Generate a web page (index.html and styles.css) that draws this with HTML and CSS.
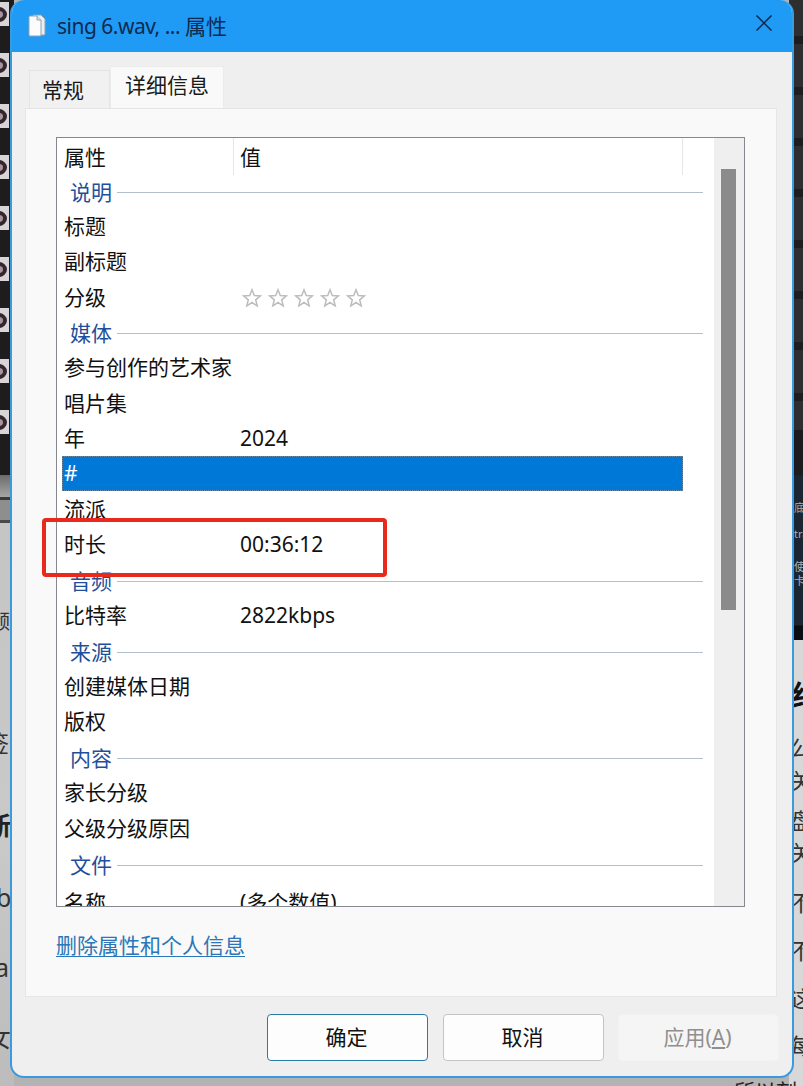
FILE: index.html
```html
<!DOCTYPE html>
<html lang="zh-CN">
<head>
<meta charset="utf-8">
<title>sing 6.wav 属性</title>
<link rel="stylesheet" href="styles.css">
</head>
<body>
<div class="desktop">
  <div class="left-icons">
    <div class="thumb"><i></i></div><div class="thumb"><i></i></div><div class="thumb"><i></i></div>
    <div class="thumb"><i></i></div><div class="thumb"><i></i></div><div class="thumb"><i></i></div>
    <div class="thumb"><i></i></div><div class="thumb"><i></i></div><div class="thumb"><i></i></div>
  </div>
  <div class="left-lower">
    <div class="lower-bar"></div>
    <div class="lower-box"></div>
    <div class="frag f1">频</div>
    <div class="frag f2">签</div>
    <div class="frag f3">新</div>
    <div class="frag f4">b</div>
    <div class="frag f5">a</div>
    <div class="frag f6">女</div>
  </div>
  <div class="right-bands"></div>
  <div class="right-navy">
    <div class="nv n1">底</div>
    <div class="nv n2">tra</div>
    <div class="nv n3">使</div>
    <div class="nv n4">卡</div>
  </div>
  <div class="right-lower">
    <div class="rf r0">红</div>
    <div class="rf r1">公</div>
    <div class="rf r2">关</div>
    <div class="rf r3">盘</div>
    <div class="rf r4">关</div>
    <div class="rf r5">不</div>
    <div class="rf r6">不</div>
    <div class="rf r7">这</div>
    <div class="rf r8">每</div>
  </div>
  <div class="bottom-text">所以刻</div>
</div>

<div class="window">
  <div class="titlebar">
    <svg class="file-icon" viewBox="0 0 20 26" width="20" height="26">
      <path d="M6 3h8l4 4v15a1 1 0 0 1-1 1H6z" fill="#e9eef2" stroke="#8fa3b3" stroke-width="1"/>
      <path d="M2 5a1 1 0 0 1 1-1h7l4 4v15a1 1 0 0 1-1 1H3a1 1 0 0 1-1-1z" fill="#fbfcfd" stroke="#8fa3b3" stroke-width="1"/>
      <path d="M10 4v4h4" fill="#dfe6ec" stroke="#8fa3b3" stroke-width="1"/>
    </svg>
    <span class="title-text"><span class="title-latin">sing 6.wav, ... </span>属性</span>
    <svg class="close-icon" viewBox="0 0 16 16" width="16" height="16">
      <path d="M.5.5l15 15M15.500.5l-15 15" stroke="#0b2447" stroke-width="1.500" fill="none"/>
    </svg>
  </div>

  <div class="client">
    <div class="tabs">
      <div class="tab">常规</div>
      <div class="tab tab-active">详细信息</div>
    </div>
    <div class="panel">
      <div class="listbox">
        <div class="list-body">
          <div class="head-row">
            <div class="head-key">属性</div>
            <div class="head-val">值</div>
          </div>
          <div class="group"><span>说明</span><b></b></div>
          <div class="row"><span>标题</span><span></span></div>
          <div class="row"><span>副标题</span><span></span></div>
          <div class="row"><span>分级</span>
            <span class="stars">
              <svg viewBox="0 0 20 20" width="20" height="20"><path d="M10 1.800l2.300 5.700 6.100.4-4.700 3.900 1.500 6-5.200-3.300-5.200 3.300 1.500-6-4.700-3.900 6.100-.4z" fill="#fff" stroke="#bdbdbd" stroke-width="1.500"/></svg>
              <svg viewBox="0 0 20 20" width="20" height="20"><path d="M10 1.800l2.300 5.700 6.100.4-4.700 3.900 1.500 6-5.200-3.300-5.200 3.300 1.500-6-4.700-3.900 6.100-.4z" fill="#fff" stroke="#bdbdbd" stroke-width="1.500"/></svg>
              <svg viewBox="0 0 20 20" width="20" height="20"><path d="M10 1.800l2.300 5.700 6.100.4-4.700 3.900 1.500 6-5.200-3.300-5.200 3.300 1.500-6-4.700-3.900 6.100-.4z" fill="#fff" stroke="#bdbdbd" stroke-width="1.500"/></svg>
              <svg viewBox="0 0 20 20" width="20" height="20"><path d="M10 1.800l2.300 5.700 6.100.4-4.700 3.900 1.500 6-5.200-3.300-5.200 3.300 1.500-6-4.700-3.900 6.100-.4z" fill="#fff" stroke="#bdbdbd" stroke-width="1.500"/></svg>
              <svg viewBox="0 0 20 20" width="20" height="20"><path d="M10 1.800l2.300 5.700 6.100.4-4.700 3.900 1.500 6-5.200-3.300-5.200 3.300 1.500-6-4.700-3.900 6.100-.4z" fill="#fff" stroke="#bdbdbd" stroke-width="1.500"/></svg>
            </span>
          </div>
          <div class="group"><span>媒体</span><b></b></div>
          <div class="row"><span class="nowrap">参与创作的艺术家</span><span></span></div>
          <div class="row"><span>唱片集</span><span></span></div>
          <div class="row"><span>年</span><span>2024</span></div>
          <div class="row row-selected"><span>#</span><span></span></div>
          <div class="row"><span>流派</span><span></span></div>
          <div class="row"><span>时长</span><span>00:36:12</span></div>
          <div class="group"><span>音频</span><b></b></div>
          <div class="row"><span>比特率</span><span>2822kbps</span></div>
          <div class="group"><span>来源</span><b></b></div>
          <div class="row"><span>创建媒体日期</span><span></span></div>
          <div class="row"><span>版权</span><span></span></div>
          <div class="group"><span>内容</span><b></b></div>
          <div class="row"><span>家长分级</span><span></span></div>
          <div class="row"><span>父级分级原因</span><span></span></div>
          <div class="group group-last"><span>文件</span><b></b></div>
          <div class="row"><span>名称</span><span>(多个数值)</span></div>
        </div>
        <div class="scrollbar"><div class="scroll-thumb"></div></div>
      </div>
      <a class="remove-link" href="#">删除属性和个人信息</a>
    </div>
    <div class="footer">
      <button class="btn btn-default">确定</button>
      <button class="btn">取消</button>
      <button class="btn btn-disabled">应用(<u>A</u>)</button>
    </div>
  </div>

  <div class="highlight"></div>
</div>
</body>
</html>
```
FILE: styles.css
```css
* { box-sizing: border-box; }
html, body { margin: 0; padding: 0; }
body {
  width: 803px;
  height: 1086px;
  overflow: hidden;
  position: relative;
  background: #b3b3b3;
  font-family: "Noto Sans", "Noto Sans CJK SC", sans-serif;
  font-size: 21px;
  color: #111;
}

/* ---------- what shows behind the dialog ---------- */
.desktop { position: absolute; inset: 0; overflow: hidden; }
.left-icons {
  position: absolute; left: 0; top: 0; width: 14px; height: 475px;
  background: #1e1c1c;
  padding-top: 2px;
  display: flex; flex-direction: column; gap: 27px;
}
.thumb {
  width: 9px; height: 24px;
  background: #d9d4d6;
  position: relative;
  overflow: hidden;
}
.thumb i {
  position: absolute; left: -10px; top: 5px;
  width: 17px; height: 15px;
  border: 4px solid #33262f; border-radius: 50%;
  background: #a9939f;
}
.left-lower {
  position: absolute; left: 0; top: 475px; width: 14px; height: 611px;
  background: linear-gradient(#c4c4c4, #c9c9c9 60%, #bcbcbc);
}
.lower-bar { height: 22px; background: linear-gradient(#6b6b6b, #a6a6a6); }
.lower-box {
  height: 26px; background: #8e8e8e;
  border-top: 3px solid #3a3a3a; border-bottom: 3px solid #4a4a4a;
}
.frag { position: absolute; left: -14px; width: 25px; line-height: 28px; font-size: 25px; color: #333; }
.f1 { top: 133px; font-size: 20px; left: -10px; }
.f2 { top: 254px; font-size: 23px; }
.f3 { top: 336px; font-weight: 700; color: #222; }
.f4 { top: 408px; left: -4px; }
.f5 { top: 478px; left: -5px; }
.f6 { top: 548px; }
.right-bands {
  position: absolute; right: 0; top: 0; width: 14px; height: 430px;
  background: repeating-linear-gradient(#2e2e30 0, #2e2e30 36px, #1d1d1f 36px, #1d1d1f 44px, #2e2e30 44px, #2e2e30 51px);
}
.right-navy {
  position: absolute; right: 0; top: 430px; width: 14px; height: 210px;
  background: linear-gradient(#1c1c1e 0, #1c1c1e 45px, #1a2632 46px, #1a2632 195px, #0a0c12 196px);
}
.nv { position: absolute; left: 5px; font-size: 11px; line-height: 14px; color: #aab0b6; white-space: nowrap; }
.n1 { top: 71px; }
.n2 { top: 97px; }
.n3 { top: 130px; }
.n4 { top: 144px; }
.right-lower {
  position: absolute; right: 0; top: 640px; width: 14px; height: 446px;
  background: #d8d8d8;
}
.rf { position: absolute; left: 1px; font-size: 22px; line-height: 24px; color: #333; white-space: nowrap; }
.r0 { top: 43px; left: 3px; font-size: 28px; font-weight: 700; color: #111; }
.r1 { top: 95px; }
.r2 { top: 128px; }
.r3 { top: 168px; }
.r4 { top: 200px; }
.r5 { top: 250px; }
.r6 { top: 298px; }
.r7 { top: 346px; }
.r8 { top: 393px; }
.bottom-text {
  position: absolute; left: 734px; top: 1079px;
  font-size: 21px; line-height: 24px; color: #222;
}

/* ---------- dialog ---------- */
.window {
  position: absolute; left: 10px; top: 0;
  width: 784px; height: 1078px;
  border-radius: 14px;
  border: 2px solid #3b9ade;
  border-top: 0;
  background: #efefef;
  overflow: hidden;
  display: flex; flex-direction: column;
}
.titlebar {
  height: 52px; flex: none;
  margin: 0 -2px;
  background: #1f9bf6;
  display: flex; align-items: center;
  padding-left: 17px;
  color: #0e2a4f;
}
.file-icon { flex: none; margin-top: -2px; }
.title-text { margin-left: 10px; font-size: 21px; line-height: 28px; white-space: pre; }
.title-latin { letter-spacing: -0.500px; }
.close-icon { margin-left: auto; margin-right: 22px; margin-top: -6px; flex: none; }

.client { flex: 1; display: flex; flex-direction: column; min-height: 0; }
.tabs {
  height: 56px; flex: none;
  padding-left: 17px;
  display: flex; align-items: flex-end;
}
.tab {
  width: 81px; height: 38px;
  background: #f1f1f1;
  border: 1px solid #e4e4e4; border-bottom: 0;
  padding-left: 12px;
  line-height: 39px;
  color: #1a1a1a;
}
.tab-active {
  width: 114px; height: 42px;
  padding-left: 14px;
  background: #f9f9f9;
  line-height: 37px;
  border-color: #ececec;
}
.panel {
  height: 889px; flex: none;
  margin: 0 15px 0 13px;
  background: #f9f9f9;
  border: 1px solid #e6e6e6;
  border-top-color: #e4e4e4;
  padding: 28px 31px 0 30px;
  display: flex; flex-direction: column;
  align-items: flex-start;
}
.listbox {
  width: 689px; height: 770px; flex: none;
  background: #fff;
  border: 1px solid #85898f;
  display: flex;
  overflow: hidden;
}
.list-body { flex: 1; min-width: 0; overflow: hidden; }
.scrollbar { width: 30px; flex: none; background: #efefef; padding: 31px 8px 0 7px; }
.scroll-thumb { height: 441px; background: #8b8b8b; }

.head-row {
  height: 36.500px;
  display: flex;
  line-height: 38px;
}
.head-key { width: 177px; padding-left: 7px; border-right: 1px solid #e6e6e6; }
.head-val { width: 449px; padding-left: 6px; border-right: 1px solid #e6e6e6; }

.row {
  height: 35.400px;
  margin-left: 5px; width: 621px;
  padding-left: 2px;
  display: grid; grid-template-columns: 176px 1fr;
  line-height: 33px;
  color: #111;
}
.nowrap { white-space: nowrap; }
.row-selected {
  margin-top: -2px;
  margin-bottom: 2.400px;
  height: 35px;
  line-height: 35px;
  background: #0078d7;
  color: #fff;
  outline: 1px dotted #6b8aa6;
  outline-offset: -1px;
}
.stars { display: flex; gap: 6px; align-items: center; padding-left: 2px; margin-top: -1px; }
.stars svg { flex: none; }
.group {
  height: 35.400px;
  margin-left: 13px; width: 633px;
  display: flex; align-items: center; gap: 5px;
  color: #1f4f9a;
  line-height: 35px;
}
.group b { flex: 1; height: 1px; background: #b3bfcc; }
.group-last { margin-top: 1px; margin-bottom: 3px; }

.remove-link {
  margin-top: 24px;
  line-height: 28px;
  color: #2a76b8;
  text-decoration: underline;
  text-underline-offset: 3px;
  text-decoration-thickness: 1px;
}

.footer {
  flex: 1;
  display: flex; justify-content: flex-end; align-items: flex-start;
  gap: 15px;
  padding: 17px 13px 0 0;
}
.btn {
  width: 161px; height: 47px;
  font: inherit;
  line-height: 28px;
  padding: 0 2px 2px 0;
  color: #111;
  background: #fdfdfd;
  border: 1px solid #c4c4c4;
  border-radius: 4px;
}
.btn-default { border-color: #2a7aa6; }
.btn-disabled {
  margin-left: -1px;
  background: #f5f5f5;
  border-color: #f2f2f2;
  color: #8f8f8f;
}

/* hand-drawn annotation over the list */
.highlight {
  position: absolute; left: 30px; top: 518px;
  width: 345px; height: 59px;
  border: 4px solid #e8291c;
  border-radius: 4px;
  pointer-events: none;
}
```
